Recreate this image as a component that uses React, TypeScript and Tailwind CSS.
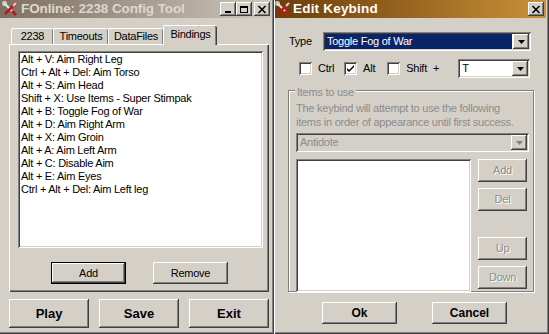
import React from 'react';

// classic win9x/2000 bevels
const RAISED =
  'shadow-[inset_-1px_-1px_#404040,inset_1px_1px_#ffffff,inset_-2px_-2px_#808080,inset_2px_2px_#d4d0c8]';
const SUNKEN =
  'shadow-[inset_1px_1px_#808080,inset_-1px_-1px_#ffffff,inset_2px_2px_#404040,inset_-2px_-2px_#d4d0c8]';

const BINDINGS = [
  'Alt + V: Aim Right Leg',
  'Ctrl + Alt + Del: Aim Torso',
  'Alt + S: Aim Head',
  'Shift + X: Use Items - Super Stimpak',
  'Alt + B: Toggle Fog of War',
  'Alt + D: Aim Right Arm',
  'Alt + X: Aim Groin',
  'Alt + A: Aim Left Arm',
  'Alt + C: Disable Aim',
  'Alt + E: Aim Eyes',
  'Ctrl + Alt + Del: Aim Left leg',
];

const ToolIcon = () => (
  <svg width="16" height="16" viewBox="0 0 16 16" className="shrink-0">
    <line x1="2" y1="2" x2="13" y2="13" stroke="#e8e8e8" strokeWidth="2" />
    <line x1="10" y1="10" x2="14" y2="14" stroke="#c01818" strokeWidth="3" />
    <line x1="14" y1="2" x2="3" y2="13" stroke="#c01818" strokeWidth="2.5" />
    <line x1="14" y1="2" x2="11" y2="5" stroke="#d8d8d8" strokeWidth="2" />
    <circle cx="2.5" cy="2.5" r="1.8" fill="none" stroke="#e0e0e0" strokeWidth="1.2" />
  </svg>
);

const CaptionButton = ({ kind }: { kind: 'min' | 'max' | 'close' }) => (
  <div className={`w-[16px] h-[14px] bg-[#d4d0c8] flex items-center justify-center ${RAISED}`}>
    <svg width="10" height="9" viewBox="0 0 10 9">
      {kind === 'min' && <rect x="2" y="6" width="6" height="2" fill="#000" />}
      {kind === 'max' && (
        <g fill="none" stroke="#000">
          <rect x="1.5" y="1.5" width="7" height="6" />
          <line x1="1" y1="2.5" x2="9" y2="2.5" />
        </g>
      )}
      {kind === 'close' && (
        <g stroke="#000" strokeWidth="1.6">
          <line x1="1.5" y1="1" x2="8.5" y2="8" />
          <line x1="8.5" y1="1" x2="1.5" y2="8" />
        </g>
      )}
    </svg>
  </div>
);

const Button = ({
  label,
  className = '',
  bold = false,
  disabled = false,
  isDefault = false,
}: {
  label: string;
  className?: string;
  bold?: boolean;
  disabled?: boolean;
  isDefault?: boolean;
}) => (
  <div
    className={`bg-[#d4d0c8] flex items-center justify-center ${isDefault ? 'border border-black' : ''} ${RAISED} ${className} ${
      bold ? 'font-bold text-[12px]' : 'text-[11px] tracking-[-0.25px]'
    } ${disabled ? 'text-[#8c8c8c] [text-shadow:1px_1px_#ffffff]' : 'text-black'}`}
  >
    {label}
  </div>
);

const DropArrow = ({ disabled = false }: { disabled?: boolean }) => (
  <div className={`w-[16px] h-full bg-[#d4d0c8] flex items-center justify-center ${RAISED}`}>
    <svg width="7" height="4" viewBox="0 0 7 4">
      <path d="M0 0h7L3.5 4z" fill={disabled ? '#808080' : '#000'} />
    </svg>
  </div>
);

const Checkbox = ({ checked = false, label }: { checked?: boolean; label: string }) => (
  <div className="flex items-center">
    <div className={`w-[13px] h-[13px] bg-white flex items-center justify-center ${SUNKEN}`}>
      {checked && (
        <svg width="7" height="7" viewBox="0 0 7 7">
          <path d="M0 3l2 2 5-5v2l-5 5-2-2z" fill="#000" />
        </svg>
      )}
    </div>
    <span className="ml-[6px]">{label}</span>
  </div>
);

const ConfigWindow = () => (
  <div className="w-[274px] h-[334px] bg-[#d4d0c8] flex flex-col pr-[2px] pb-[2px] shadow-[inset_-1px_-1px_#404040,inset_-2px_-2px_#808080]">
    <div className="h-[18px] flex items-center bg-gradient-to-r from-[#7e7060] to-[#cdc7bd] pl-[2px] pr-[2px]">
      <ToolIcon />
      <span className="ml-[3px] font-bold text-[13.5px] text-[#ddd8cf] tracking-[-0.1px]">FOnline: 2238 Config Tool</span>
      <div className="ml-auto flex items-center">
        <CaptionButton kind="min" />
        <CaptionButton kind="max" />
        <div className="w-[2px]" />
        <CaptionButton kind="close" />
      </div>
    </div>

    <div className="flex-1 flex flex-col pl-[9px] pr-[3px] tracking-[-0.25px]">
      <div className="h-[26px] flex items-end pl-[2px] text-[11px]">
        <div className="w-[42px] h-[16px] flex items-center justify-center border-l border-t border-white shadow-[inset_-1px_0_#808080] rounded-t-[2px]">2238</div>
        <div className="w-[55px] h-[16px] flex items-center justify-center border-l border-t border-white shadow-[inset_-1px_0_#808080] rounded-t-[2px]">Timeouts</div>
        <div className="w-[55px] h-[16px] flex items-center justify-center border-l border-t border-white shadow-[inset_-1px_0_#808080] rounded-t-[2px]">DataFiles</div>
        <div className="relative z-10 -mb-px w-[54px] h-[20px] pb-[2px] bg-[#d4d0c8] flex items-center justify-center border-l border-t border-white shadow-[inset_-1px_0_#404040,inset_-2px_0_#808080] rounded-t-[2px]">Bindings</div>
      </div>

      <div className="h-[248px] w-[260px] flex flex-col pt-[6px] pl-[8px] pr-[6px] border-l border-t border-white shadow-[inset_-1px_-1px_#404040,inset_-2px_-2px_#808080]">
        <div className={`h-[197px] bg-white px-[3px] py-[2px] text-[11px] leading-[13px] ${SUNKEN}`}>
          {BINDINGS.map((b, i) => (
            <div key={i} className="whitespace-nowrap">{b}</div>
          ))}
        </div>
        <div className="flex mt-[14px] pl-[33px]">
          <Button label="Add" isDefault className="w-[75px] h-[22px]" />
          <Button label="Remove" className="w-[75px] h-[22px] ml-[27px]" />
        </div>
      </div>

      <div className="flex gap-[10px] mt-[7px] w-[260px] tracking-normal">
        <Button label="Play" bold className="w-[80px] h-[29px] text-[13px]" />
        <Button label="Save" bold className="w-[80px] h-[29px] text-[13px]" />
        <Button label="Exit" bold className="w-[80px] h-[29px] text-[13px]" />
      </div>
    </div>
  </div>
);

const KeybindWindow = () => (
  <div className="w-[275px] h-[334px] bg-[#d4d0c8] flex flex-col pl-[1px] pr-[3px] pb-[2px] shadow-[inset_1px_0_#ffffff,inset_-1px_-1px_#404040,inset_-2px_-2px_#808080]">
    <div className="h-[18px] flex items-center bg-gradient-to-r from-[#6b3d0a] to-[#c99238] pr-[2px]">
      <ToolIcon />
      <span className="ml-[2px] font-bold text-[13.5px] text-white tracking-[0.2px]">Edit Keybind</span>
      <div className="ml-auto">
        <CaptionButton kind="close" />
      </div>
    </div>

    <div className="flex-1 flex flex-col text-[11px] tracking-[-0.25px]">
      <div className="flex items-center mt-[14px] pl-[14px]">
        <span className="w-[34px]">Type</span>
        <div className={`w-[208px] h-[19px] bg-white flex items-stretch p-[2px] ${SUNKEN}`}>
          <div className="flex-1 bg-[#0a246a] text-white flex items-center pl-[2px] mr-[1px]">Toggle Fog of War</div>
          <DropArrow />
        </div>
      </div>

      <div className="flex items-center mt-[8px] pl-[24px]">
        <Checkbox label="Ctrl" />
        <div className="w-[10px]" />
        <Checkbox checked label="Alt" />
        <div className="w-[12px]" />
        <Checkbox label="Shift" />
        <span className="ml-[6px]">+</span>
        <div className={`ml-[19px] w-[72px] h-[19px] bg-white flex items-stretch p-[2px] ${SUNKEN}`}>
          <div className="flex-1 flex items-center pl-[2px]">T</div>
          <DropArrow />
        </div>
      </div>

      <div className="relative mt-[12px] ml-[13px] w-[246px] h-[202px] border border-[#808080] shadow-[inset_1px_1px_#ffffff,1px_1px_#ffffff] pt-[10px] pl-[7px] pr-[6px]">
        <span className="absolute -top-[7px] left-[6px] bg-[#d4d0c8] px-[2px] text-[#8c8c8c]">Items to use</span>
        <div className="text-[#8c8c8c] leading-[14px] whitespace-nowrap">
          <div>The keybind will attempt to use the following</div>
          <div>items in order of appearance until first success.</div>
        </div>
        <div className={`mt-[4px] w-[233px] h-[19px] flex items-stretch p-[2px] ${SUNKEN}`}>
          <div className="flex-1 flex items-center pl-[2px] text-[#8c8c8c]">Antidote</div>
          <DropArrow disabled />
        </div>
        <div className="flex mt-[7px]">
          <div className={`w-[176px] h-[133px] bg-white ${SUNKEN}`} />
          <div className="ml-[7px] flex flex-col">
            <Button label="Add" disabled className="w-[49px] h-[23px]" />
            <Button label="Del" disabled className="w-[49px] h-[23px] mt-[6px]" />
            <Button label="Up" disabled className="w-[49px] h-[23px] mt-[26px]" />
            <Button label="Down" disabled className="w-[49px] h-[23px] mt-[6px]" />
          </div>
        </div>
      </div>

      <div className="flex mt-[10px] pl-[47px] tracking-normal">
        <Button label="Ok" bold className="w-[75px] h-[22px]" />
        <Button label="Cancel" bold className="w-[75px] h-[22px] ml-[35px]" />
      </div>
    </div>
  </div>
);

export default function App() {
  return (
    <div className="w-[549px] h-[334px] flex bg-[#d4d0c8] overflow-hidden font-['Liberation_Sans',Arial,sans-serif] text-black">
      <ConfigWindow />
      <KeybindWindow />
    </div>
  );
}
